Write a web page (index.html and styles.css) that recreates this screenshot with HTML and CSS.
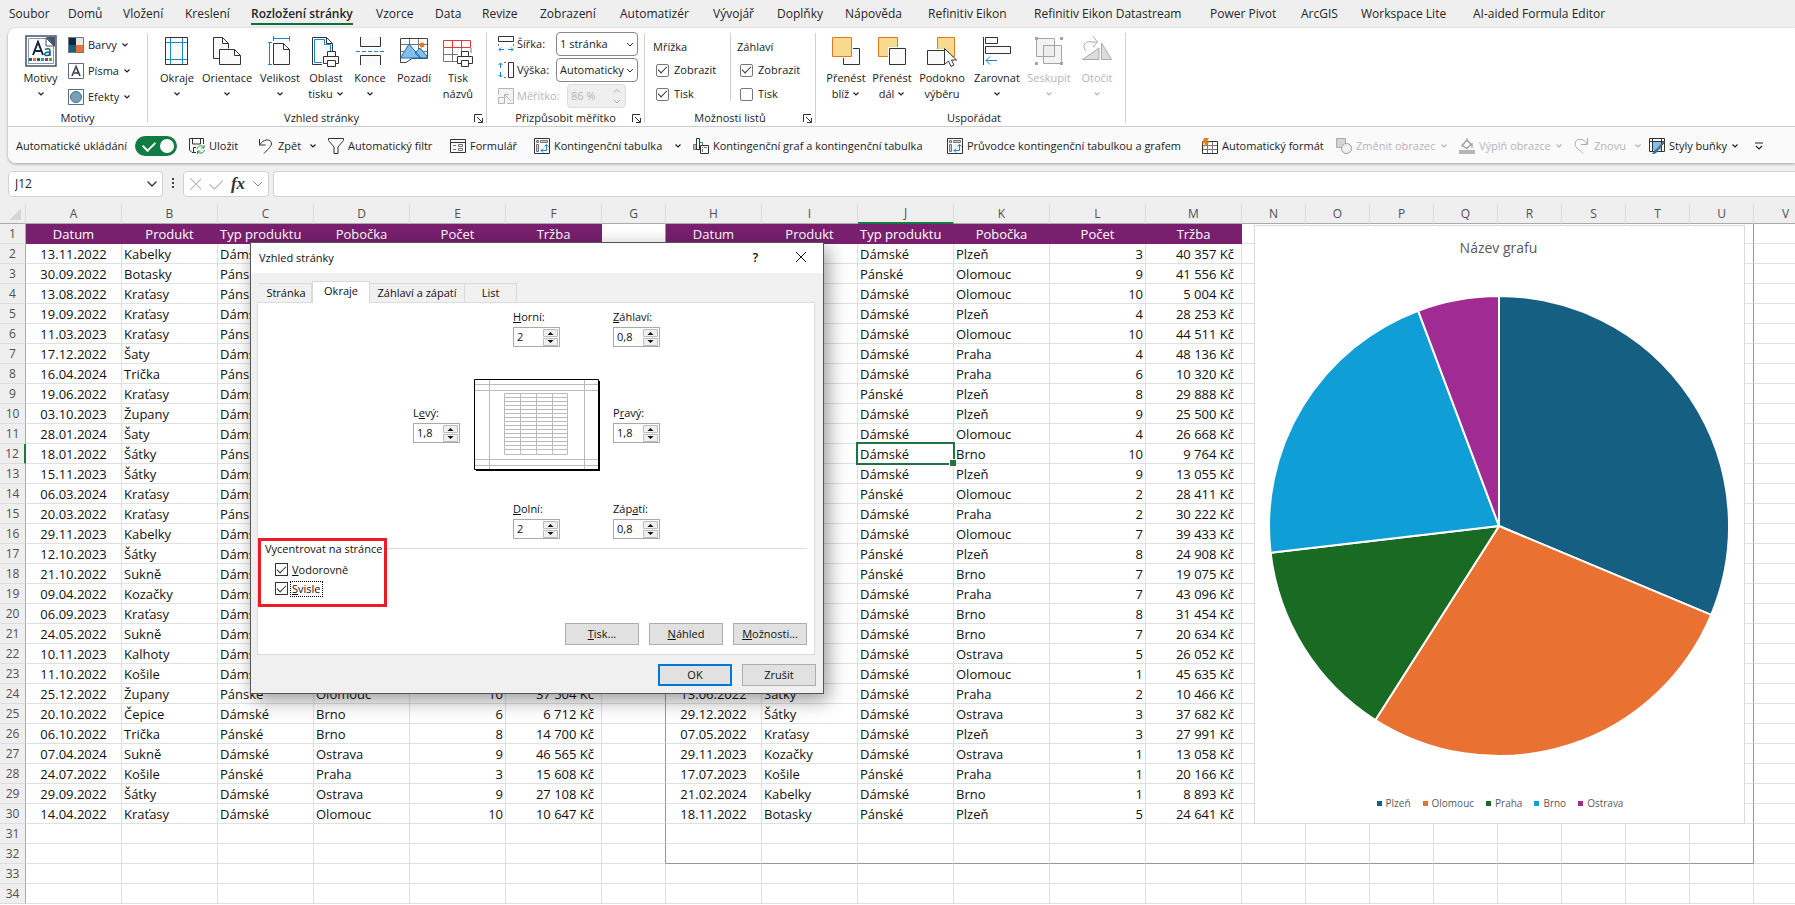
FILE: index.html
```html
<!DOCTYPE html>
<html lang="cs">
<head>
<meta charset="utf-8">
<title>Sešit – Vzhled stránky</title>
<link rel="stylesheet" href="styles.css">
</head>
<body>
<svg class="defs" aria-hidden="true">
  <symbol id="chev" viewBox="0 0 8 8"><path d="M1.500 2.500 4 5l2.500-2.500" fill="none" stroke="currentColor" stroke-width="1.200"/></symbol>
  <symbol id="launch" viewBox="0 0 9 9"><path d="M.5 8V.5H8M3 3l5 5M8.500 4v4.500H4" fill="none" stroke="#333"/></symbol>
  <symbol id="pivot" viewBox="0 0 16 16"><path d="M.5.5h15v15H.5z" fill="#fafafa" stroke="#333"/><path d="M2.500 2.500h2v2h-2zM6.500 2.500h7v2h-7zM2.500 6.500h2v7h-2z" fill="#ccc" stroke="#777"/><path d="M12.500 7v5.500H7M10.500 8.500l2-2 2 2M9 10.500l-2 2 2 2" fill="none" stroke="#1a86d0"/></symbol>
</svg>

<nav class="tabs">
  <a href="#">Soubor</a><a href="#">Domů</a><a href="#">Vložení</a><a href="#">Kreslení</a><a href="#" class="current"><span>Rozložení stránky</span></a><a href="#">Vzorce</a><a href="#">Data</a><a href="#">Revize</a><a href="#">Zobrazení</a><a href="#">Automatizér</a><a href="#">Vývojář</a><a href="#">Doplňky</a><a href="#">Nápověda</a><a href="#">Refinitiv Eikon</a><a href="#">Refinitiv Eikon Datastream</a><a href="#">Power Pivot</a><a href="#">ArcGIS</a><a href="#">Workspace Lite</a><a href="#">AI-aided Formula Editor</a>
</nav>

<header class="ribbon">
  <div class="groups">
    <section class="group g-themes">
      <div class="row">
        <button class="big w-64"><svg width="32" height="32" viewBox="0 0 32 32"><path d="M1 1h30v30H1z" fill="#fff" stroke="#44546a" stroke-width="1.500"/><path d="M3.500 3.500h25v25h-25z" fill="#fff" stroke="#8497b0"/><path d="M21 2h9v10z" fill="#44546a"/><path d="M21 3v8h8z" fill="#fff" stroke="#44546a"/><path d="M8 20 13 7l5 13M9.500 16h7" fill="none" stroke="#0e2841" stroke-width="2"/><path d="M20 14.500c4-2 5 0 5 1.500v5M25 17c-7 0-6 4-3 3.500 2 0 3-1.500 3-3" fill="none" stroke="#156082" stroke-width="1.500"/><path d="M4 23h3v3H4z" fill="#156082"/><path d="M8 23h3v3H8z" fill="#e97132"/><path d="M12 23h3v3h-3z" fill="#196b24"/><path d="M16 23h3v3h-3z" fill="#0f9ed5"/><path d="M20 23h3v3h-3z" fill="#a02b93"/><path d="M24 23h3v3h-3z" fill="#4ea72e"/></svg><span>Motivy</span><svg class="chev"><use href="#chev"/></svg></button>
        <div class="stack">
          <button class="small"><svg width="16" height="16"><path d="M0 0h8v8H0z" fill="#0e2841"/><path d="M8 0h8v8H8z" fill="#e8e8e8"/><path d="M0 8h8v8H0z" fill="#156082"/><path d="M8 8h8v8H8z" fill="#e97132"/><path d="M.5.5h15v15H.5z" fill="none" stroke="#777"/></svg><span>Barvy</span><svg class="chev"><use href="#chev"/></svg></button>
          <button class="small"><svg width="16" height="16"><path d="M.5.5h15v15H.5z" fill="#fff" stroke="#5b6b82"/><path d="M4 13 8 3.500 12 13M5.500 10h5" fill="none" stroke="#2b3a55" stroke-width="1.600"/><path d="M5 12l3-8" stroke="#e97132" stroke-width=".6"/></svg><span>Písma</span><svg class="chev"><use href="#chev"/></svg></button>
          <button class="small"><svg width="16" height="16"><path d="M.5.5h15v15H.5z" fill="#fff" stroke="#5b6b82"/><circle cx="8" cy="8" r="5.500" fill="#7ba0b8" stroke="#3b7590"/></svg><span>Efekty</span><svg class="chev"><use href="#chev"/></svg></button>
        </div>
      </div>
      <h2>Motivy</h2>
    </section>

    <section class="group g-page">
      <div class="row">
        <button class="big w-40"><svg width="24" height="32" viewBox="0 0 24 32"><path d="M.5 2.500h22v27H.5z" fill="#fafafa" stroke="#333"/><path d="M5.500 3v26M17.500 3v26M1 7.500h21M1 24.500h21" stroke="#1a86d0"/></svg><span>Okraje</span><svg class="chev"><use href="#chev"/></svg></button>
        <button class="big w-60"><svg width="28" height="32" viewBox="0 0 28 32"><g fill="#fafafa" stroke="#333"><path d="M6 23.500H.5v-21h9l6 6v5M9.500 2.500v6h6"/><path d="M6.500 14.500h15l6 6v9h-21zM21.500 14.500v6h6"/></g></svg><span>Orientace</span><svg class="chev"><use href="#chev"/></svg></button>
        <button class="big w-46"><svg width="24" height="32" viewBox="0 0 24 32"><path d="M5.500 8.500h10l6 6v15h-16zM15.500 8.500v6h6" fill="#fafafa" stroke="#333"/><path d="M5 3.500h16M5.500 1v5M21.500 1v5M1.500 8v22M0 7.500h4M0 29.500h4" stroke="#1a86d0"/></svg><span>Velikost</span><svg class="chev"><use href="#chev"/></svg></button>
        <button class="big w-46"><svg width="28" height="32" viewBox="0 0 28 32"><path d="M10 29.500H.5v-27h14l6 6V16" fill="#fafafa" stroke="#333"/><path d="M10 27.500H2.500v-23h10v5h6V16" fill="none" stroke="#1a86d0"/><path d="M14.500 2.500v6h6" fill="none" stroke="#333"/><g fill="#fff" stroke="#333"><path d="M15.500 22v-5.500h8V22"/><path d="M11.500 21.500h15v7h-15z"/><path d="M15.500 25.500h8v6h-8z"/></g></svg><span>Oblast<br>tisku <svg class="chev"><use href="#chev"/></svg></span></button>
        <button class="big w-42"><svg width="28" height="32" viewBox="0 0 28 32"><path d="M4.500 2v9.500h20V2M4.500 30v-9.500h20V30" fill="#fafafa" stroke="#333"/><path d="M0 16.500h30" stroke="#1a86d0" stroke-dasharray="4 2"/></svg><span>Konce</span><svg class="chev"><use href="#chev"/></svg></button>
        <button class="big w-46"><svg width="28" height="32" viewBox="0 0 28 32"><path d="M.5 3.500h27v20H12l-6 4H.5z" fill="#fff" stroke="#444"/><path d="M9.500 4v19M18.500 4v12M1 9.500h26M1 16.500h26" stroke="#777"/><path d="M1 22 9 9l12 14H1zM15 18l5-5 7 8v2H20z" fill="#83beec" stroke="#1a70b0"/><circle cx="22" cy="10" r="2.500" fill="#e07b1c"/></svg><span>Pozadí</span></button>
        <button class="big w-42"><svg width="30" height="32" viewBox="0 0 30 32"><path d="M15 26.500H.5v-14M28 13v5M.5 19.500H15M9.500 13v13M18.500 13v4" fill="none" stroke="#777"/><path d="M.5 5.500h27v7H.5zM9.500 5v8M18.500 5v8" fill="none" stroke="#e33" /><g fill="#fff" stroke="#333"><path d="M18.500 22v-5.500h7V22"/><path d="M14.500 21.500h15v7h-15z"/><path d="M18.500 25.500h7v6h-7z"/></g></svg><span>Tisk<br>názvů</span></button>
      </div>
      <h2>Vzhled stránky</h2><svg class="launch"><use href="#launch"/></svg>
    </section>

    <section class="group g-scale">
      <div class="fields">
        <svg width="16" height="16"><path d="M.5.5h15v5H.5z" fill="#fafafa" stroke="#333"/><path d="M.5 8v2M15.500 8v2" stroke="#777"/><path d="M1 13.500h5M10 13.500h5M3 11.500l-2 2 2 2M13 11.500l2 2-2 2" fill="none" stroke="#1a86d0"/></svg><label for="wid">Šířka:</label><select id="wid"><option>1 stránka</option></select>
        <svg width="16" height="16"><path d="M10.500.5h5v15h-5z" fill="#fafafa" stroke="#333"/><path d="M6 .5h2M6 15.500h2" stroke="#777"/><path d="M2.500 1v5M2.500 10v5M.5 3l2-2 2 2M.5 13l2 2 2-2" fill="none" stroke="#1a86d0"/></svg><label for="hei">Výška:</label><select id="hei"><option>Automaticky</option></select>
        <svg width="16" height="16"><path d="M.5 7V.5h15v15H9M.5 9.500h6v6h-6z" fill="#f3f3f3" stroke="#b5b5b5"/><path d="m13 13-6-6M6.500 11V6.500H11" fill="none" stroke="#b5b5b5"/></svg><label for="sca" class="off">Měřítko:</label><span class="pct"><input id="sca" value="86 %" disabled><svg width="8" height="18"><path d="M1 5.500 4 2.500 7 5.500M1 13l3 3 3-3" fill="none" stroke="#aaa"/></svg></span>
      </div>
      <h2>Přizpůsobit měřítko</h2><svg class="launch"><use href="#launch"/></svg>
    </section>

    <section class="group g-sheet">
      <div class="row">
        <div class="checks"><h3>Mřížka</h3><label><input type="checkbox" checked>Zobrazit</label><label><input type="checkbox" checked>Tisk</label></div>
        <div class="checks"><h3>Záhlaví</h3><label><input type="checkbox" checked>Zobrazit</label><label><input type="checkbox">Tisk</label></div>
      </div>
      <h2>Možnosti listů</h2><svg class="launch"><use href="#launch"/></svg>
    </section>

    <section class="group g-arrange">
      <div class="row">
        <button class="big w-46"><svg width="28" height="32" viewBox="0 0 28 32"><path d="M11.500 13.500h16v16h-16z" fill="#fafafa" stroke="#333"/><path d="M0 2h21v21H0z" fill="#fff"/><path d="M.5 2.500h19v19H.5z" fill="#f8da8e" stroke="#e07b1c"/></svg><span>Přenést<br>blíž <svg class="chev"><use href="#chev"/></svg></span></button>
        <button class="big w-46"><svg width="28" height="32" viewBox="0 0 28 32"><path d="M.5 2.500h19v19H.5z" fill="#f8da8e" stroke="#e07b1c"/><path d="M10 12h18v19H10z" fill="#fff"/><path d="M11.500 13.500h16v16h-16z" fill="#fafafa" stroke="#333"/></svg><span>Přenést<br>dál <svg class="chev"><use href="#chev"/></svg></span></button>
        <button class="big w-54"><svg width="30" height="32" viewBox="0 0 30 32"><path d="M10.500 2.500h17v19h-17z" fill="#f8da8e" stroke="#e07b1c"/><path d="M0 14h18v2H0z" fill="#fff"/><path d="M.5 15.500h17v14H.5z" fill="#fafafa" stroke="#333"/><path d="M17.500 13.500v16l4-3.500 2.500 5.500 3-1.500-2.500-5h5z" fill="#fff" stroke="#333"/></svg><span>Podokno<br>výběru</span></button>
        <button class="big w-56"><svg width="28" height="32" viewBox="0 0 28 32"><path d="M.5 2v28M2.500 2.500h12v6h-12zM2.500 11.500h25v7h-25z" fill="#fafafa" stroke="#333"/><path d="M14 25.500H3M7 21.500l-4 4 4 4" fill="none" stroke="#1a86d0"/></svg><span>Zarovnat</span><svg class="chev"><use href="#chev"/></svg></button>
        <button class="big w-48 off" disabled><svg width="28" height="32" viewBox="0 0 28 32"><path d="M1.500 3.500h18v18h-18zM8.500 10.500h18v18h-18z" fill="#f3f3f3" stroke="#a5a5a5"/><path d="M8.500 10.500h11v11h-11z" fill="#eee" stroke="#a5a5a5"/><path d="M0 2h3v3H0zM25 2h3v3h-3zM0 27h3v3H0zM25 27h3v3h-3z" fill="#a5a5a5"/></svg><span>Seskupit</span><svg class="chev"><use href="#chev"/></svg></button>
        <button class="big w-48 off" disabled><svg width="30" height="32" viewBox="0 0 30 32"><path d="M17 13v11.500H.5zM19.500 8v16.500h10z" fill="#ddd" stroke="#aaa"/><path d="M4 16c-5-5 0-11 5-9h6M11 1.500 15.500 7 11 12" fill="none" stroke="#aaa"/></svg><span>Otočit</span><svg class="chev"><use href="#chev"/></svg></button>
      </div>
      <h2>Uspořádat</h2>
    </section>
  </div>

  <div class="qat">
    <label for="auto">Automatické ukládání</label>
    <input id="auto" class="toggle" type="checkbox" checked>
    <button><svg width="16" height="16"><path d="M7 14.500H3L.5 12V.5h14V6M3.500 1v5h8V1M4.500 14V9.500H7" fill="none" stroke="#333"/><path d="M8 11c1-4 6-4 7-1M15 7v3h-3M15.500 12c-1 4-6 4-7 1M8.500 16v-3h3" fill="none" stroke="#2b9348"/></svg>Uložit</button>
    <button><svg width="16" height="16"><path d="M1.500 1v6h6M2 6.500C6 0 14 1 13.500 6 13 9 9 12 6 15.500" fill="none" stroke="#333"/></svg>Zpět</button>
    <svg class="chev"><use href="#chev"/></svg>
    <button><svg width="16" height="16"><path d="M.5.5h15v2L10 9v6.500H6V9L.5 2.500z" fill="#fafafa" stroke="#333"/></svg>Automatický filtr</button>
    <button><svg width="16" height="16"><path d="M.5 1.500h15v13H.5zM.5 4.500h15" fill="#fafafa" stroke="#333"/><path d="M3 7.500h3M3 11.500h3M8.500 6.500h4v2h-4zM8.500 10.500h4v2h-4z" fill="none" stroke="#777"/></svg>Formulář</button>
    <button><svg width="16" height="16"><use href="#pivot"/></svg>Kontingenční tabulka</button>
    <svg class="chev"><use href="#chev"/></svg>
    <button><svg width="16" height="16"><path d="M.5 6.500h3v5h-3z" fill="#bbb" stroke="#777"/><path d="M3.500.5h3v11h-3z" fill="#fff" stroke="#333"/><path d="M6.500 4.500h3v3" fill="none" stroke="#1a86d0"/><path d="M7.500 7.500h8v8h-8z" fill="#fff" stroke="#333"/><path d="M9 9.500h1M11 9.500h3M9.500 11v3" stroke="#777"/></svg>Kontingenční graf a kontingenční tabulka</button>
    <button><svg width="16" height="16"><use href="#pivot"/></svg>Průvodce kontingenční tabulkou a grafem</button>
    <button><svg width="16" height="16"><path d="M.5 3.500h15v12H.5z" fill="#fff" stroke="#333"/><path d="M1 7.500h14M1 11.500h14M5.500 4v11M10.500 4v11" stroke="#777"/><path d="M2 0h5L5 3.500h3L1 10l2-4.500H0z" fill="#e8801c"/></svg>Automatický formát</button>
    <button class="off" disabled><svg width="16" height="16"><path d="M.5.5h9v9h-9z" fill="#d5d5d5" stroke="#aaa"/><circle cx="10.500" cy="10.500" r="5" fill="#f0f0f0" stroke="#999"/></svg>Změnit obrazec <svg class="chev"><use href="#chev"/></svg></button>
    <button class="off" disabled><svg width="16" height="16"><path d="M0 12h16v4H0z" fill="#b5b5b5"/><path d="M3 7.500 8 2l4 4.500-4 4zM8 2V0M13 5v5" fill="none" stroke="#999" stroke-width="1.200"/></svg>Výplň obrazce <svg class="chev"><use href="#chev"/></svg></button>
    <button class="off" disabled><svg width="16" height="16"><path d="M13.500 0v6.500H7M13 6C10-.500 1 0 1 6c0 4 5 6 8 9.500" fill="none" stroke="#aaa"/></svg>Znovu</button>
    <svg class="chev off"><use href="#chev"/></svg>
    <button><svg width="16" height="16"><path d="M.5.5h15v13H.5z" fill="#fff" stroke="#333"/><path d="M3 3h10v9H3z" fill="#83beec"/><path d="M0 3.500h15M3.500 1v12M12.500 1v12" stroke="#333"/><path d="M15 4 8 12" stroke="#666" stroke-width="2"/><path d="M9 11c0 4-3 5-6 5 2-2 2-5 6-5" fill="#1a70b0"/></svg>Styly buňky <svg class="chev"><use href="#chev"/></svg></button>
    <svg width="8" height="8"><path d="M0 1h8M1 4l3 3 3-3" fill="none" stroke="#222" stroke-width="1.200"/></svg>
  </div>
</header>

<div class="formula">
  <div class="namebox"><input aria-label="Pole názvů" value="J12"><svg width="10" height="8"><path d="M.5 1.500 5 6l4.500-4.500" fill="none" stroke="#333" stroke-width="1.300"/></svg></div>
  <svg class="dots" width="3" height="12"><path d="M0 0h2v2H0zM0 4h2v2H0zM0 8h2v2H0z" fill="#444"/></svg>
  <div class="fx"><svg width="12" height="12"><path d="m0 0 12 12M12 0 0 12" stroke="#b5b5b5" stroke-width="1.200"/></svg><svg width="16" height="12"><path d="m.5 6.500 5 4.500 10-10" fill="none" stroke="#b5b5b5" stroke-width="1.200"/></svg><i>fx</i><svg width="10" height="8"><path d="M.5 1.500 5 6l4.500-4.500" fill="none" stroke="#888"/></svg></div>
  <input class="bar" aria-label="Řádek vzorců">
</div>

<main class="sheet">
  <table class="grid">
    <colgroup><col class="c-num"><col class="c-wide" span="6"><col class="c-std"><col class="c-wide" span="6"><col class="c-std" span="8"><col></colgroup>
    <thead><tr id="heads"></tr></thead>
    <tbody id="rows"></tbody>
  </table>

  <figure class="chart">
    <figcaption>Název grafu</figcaption>
    <svg viewBox="-232 -232 464 464" role="img" aria-label="Výsečový graf">
      <g stroke="#fff" stroke-width="2" stroke-linejoin="round">
        <path d="M0 0V-230A230 230 0 0 1 212.200 88.800z" fill="#156082"/>
        <path d="M0 0 212.200 88.800A230 230 0 0 1-123.600 194z" fill="#e97132"/>
        <path d="M0 0-123.600 194A230 230 0 0 1-228.400 26.800z" fill="#196b24"/>
        <path d="M0 0-228.400 26.800A230 230 0 0 1-80.900-215.300z" fill="#0f9ed5"/>
        <path d="M0 0-80.900-215.300A230 230 0 0 1 0-230z" fill="#a02b93"/>
      </g>
    </svg>
    <ul><li class="k1">Plzeň</li><li class="k2">Olomouc</li><li class="k3">Praha</li><li class="k4">Brno</li><li class="k5">Ostrava</li></ul>
  </figure>

  <section class="dialog" role="dialog" aria-labelledby="dt">
    <div class="title"><h1 id="dt">Vzhled stránky</h1><button aria-label="Nápověda">?</button><button aria-label="Zavřít"><svg width="10" height="10"><path d="m0 0 10 10M10 0 0 10" stroke="#111"/></svg></button></div>
    <div class="body">
      <div class="dtabs" role="tablist"><button role="tab">Stránka</button><button role="tab" class="on" aria-selected="true">Okraje</button><button role="tab">Záhlaví a zápatí</button><button role="tab">List</button></div>
      <div class="panel" role="tabpanel">
        <div class="margins">
          <div class="f top"><label for="m1"><u>H</u>orní:</label><span class="spin"><input id="m1" value="2"><svg width="15" height="17"><use href="#ud"/></svg></span></div>
          <div class="f head"><label for="m2"><u>Z</u>áhlaví:</label><span class="spin"><input id="m2" value="0,8"><svg width="15" height="17"><use href="#ud"/></svg></span></div>
          <div class="f left"><label for="m3">L<u>e</u>vý:</label><span class="spin"><input id="m3" value="1,8"><svg width="15" height="17"><use href="#ud"/></svg></span></div>
          <svg class="preview" width="126" height="92"><path d="M2 2h124v90H2z"/><path d="M.5.5h124v90H.5z" fill="#fff" stroke="#000"/><path d="M1 5.500h123M1 11.500h123M1 80.500h123M1 86.500h123M15.500 1v89M110.500 1v89" stroke="#bbb"/><path d="M30.500 14.500h63v61h-63zM46.500 14v62M62.500 14v62M78.500 14v62M30 18.500h64M30 22.500h64M30 26.500h64M30 30.500h64M30 34.500h64M30 38.500h64M30 42.500h64M30 46.500h64M30 50.500h64M30 54.500h64M30 58.500h64M30 62.500h64M30 66.500h64M30 70.500h64" fill="none" stroke="#bbb"/></svg>
          <div class="f right"><label for="m4">P<u>r</u>avý:</label><span class="spin"><input id="m4" value="1,8"><svg width="15" height="17"><use href="#ud"/></svg></span></div>
          <div class="f bottom"><label for="m5"><u>D</u>olní:</label><span class="spin"><input id="m5" value="2"><svg width="15" height="17"><use href="#ud"/></svg></span></div>
          <div class="f foot"><label for="m6">Záp<u>a</u>tí:</label><span class="spin"><input id="m6" value="0,8"><svg width="15" height="17"><use href="#ud"/></svg></span></div>
        </div>
        <div class="center">
          <fieldset class="marked"><legend>Vycentrovat na stránce</legend>
            <label><input type="checkbox" checked><span><u>V</u>odorovně</span></label>
            <label><input type="checkbox" checked><span class="focus"><u>S</u>visle</span></label>
          </fieldset>
          <hr>
        </div>
        <div class="btns"><button><u>T</u>isk...</button><button><u>N</u>áhled</button><button><u>M</u>ožnosti...</button></div>
      </div>
      <div class="btns end"><button class="ok">OK</button><button>Zrušit</button></div>
    </div>
  </section>
</main>
<svg class="defs" aria-hidden="true"><symbol id="ud" viewBox="0 0 15 17"><path d="M.5.5h14v7H.5zM.5 9.500h14v7H.5z" fill="#f0f0f0" stroke="#bbb"/><path d="M4.500 6h6L7.500 3zM4.500 11h6l-3 3z" fill="#111"/></symbol></svg>
<script src="grid.js"></script>
</body>
</html>
```
FILE: styles.css
```css
* { box-sizing: border-box; }
body {
  margin: 0; height: 100vh; overflow: hidden; display: flex; flex-direction: column;
  background: #efefef; color: #222; font: 11px/16px "Open Sans", "Noto Sans", sans-serif;
}
button, input, select { font: inherit; color: inherit; }
button { border: 0; background: none; padding: 0; white-space: nowrap; }
h1, h2, h3 { margin: 0; font: inherit; }
.defs { position: absolute; width: 0; height: 0; }
.off { color: #b5b5b5; }
.chev { width: 8px; height: 8px; flex: none; }

.tabs {
  flex: none; height: 28px; padding: 1px 0 0 9px; font-size: 12px; line-height: 26px;
  display: grid; white-space: nowrap;
  grid-template-columns: 59px 55px 62px 66px 125px 59px 47px 58px 80px 93px 64px 68px 83px 106px 176px 91px 60px 112px 1fr;
}
.tabs a { color: #262626; text-decoration: none; }
.tabs .current span { display: inline-block; height: 24px; font-weight: 600; border-bottom: 2px solid #0e703c; }

.ribbon {
  flex: none; margin-left: 8px; background: #fff; border-radius: 8px 0 0 8px; overflow: hidden;
  box-shadow: 0 1px 3px #0005;
}
.groups { display: flex; height: 99px; padding: 5px 0 3px; border-bottom: 1px solid #ccc; }
.group { position: relative; flex: none; border-right: 1px solid #d0d0d0; display: flex; flex-direction: column; }
.group h2 { margin-top: auto; text-align: center; line-height: 11px; }
.launch { position: absolute; right: 3px; bottom: 0; width: 9px; height: 9px; }
.g-themes { width: 140px; }
.g-page { width: 339px; padding-left: 9px; }
.g-scale { width: 158px; }
.g-sheet { width: 171px; }
.g-arrange { width: 310px; padding-left: 7px; }
.row { display: flex; }
.big { display: flex; flex-direction: column; align-items: center; padding-top: 2px; flex: none; }
.big > svg:first-child { margin-bottom: 3px; }
.big > .chev { margin-top: 4px; }
.w-40 { width: 40px; } .w-42 { width: 42px; } .w-46 { width: 46px; } .w-48 { width: 48px; }
.w-54 { width: 54px; } .w-56 { width: 56px; } .w-60 { width: 60px; } .w-64 { width: 60px; padding-left: 5px; }
.stack { margin-top: -1px; }
.small { display: flex; align-items: center; gap: 4px; height: 26px; }
.fields { display: grid; grid-template-columns: 16px 42px 82px; grid-auto-rows: 26px; align-items: center; padding-left: 11px; margin-top: -2px; }
.fields label { padding-left: 3px; white-space: nowrap; }
.fields select { width: 82px; height: 24px; border: 1px solid #888; border-radius: 4px; padding: 0 13px 0 3px; appearance: none;
  overflow: hidden; text-overflow: clip; background-color: #fff;
  background-image: linear-gradient(45deg, #0000 42%, #333 42% 62%, #0000 62%), linear-gradient(-45deg, #0000 42%, #333 42% 62%, #0000 62%);
  background-size: 3px 3px; background-repeat: no-repeat; background-position: right 7px center, right 4px center; }
.pct { display: flex; align-items: center; margin-left: 11px; width: 59px; height: 24px; border: 1px solid #ddd; border-radius: 4px; background: #efefef; }
.pct input { width: 45px; border: 0; background: none; padding: 0 3px; color: #b5b5b5; }
.checks { width: 86px; padding: 5px 0 0 8px; height: 68px; }
.checks + .checks { border-left: 1px solid #ccc; padding-left: 6px; }
.checks h3 { margin-bottom: 2px; line-height: 18px; }
.checks label { display: flex; align-items: center; gap: 5px; padding-left: 3px; height: 24px; }
input[type=checkbox] { flex: none; appearance: none; margin: 0; width: 13px; height: 13px; border: 1px solid #777; border-radius: 2px; background: #fff; display: grid; place-items: center; }
input[type=checkbox]:checked::before { content: ""; width: 8px; height: 4px; margin-bottom: 3px; border: solid #333; border-width: 0 0 1px 1px; transform: rotate(-45deg); }

.qat {
  display: grid; height: 36px; padding: 2px 0 0 8px; align-items: center; background: #fafafa; white-space: nowrap;
  grid-template-columns: 119px 54px 69px 51px 19px 122px 84px 140px 19px 254px 255px 134px 123px 115px 60px 15px 106px 8px;
}
.qat button { display: flex; align-items: center; gap: 4px; }
.qat .toggle { width: 42px; height: 20px; border-radius: 10px; border: 0; background: #107c41; position: relative; }
.qat .toggle::after { content: ""; position: absolute; right: 3px; top: 3px; width: 14px; height: 14px; border-radius: 50%; background: #fff; }
.qat .toggle:checked::before { position: absolute; left: 8px; top: 5px; width: 10px; height: 6px; border-color: #fff; border-width: 0 0 2px 2px; }

.formula { flex: none; display: flex; align-items: center; height: 26px; margin: 8px 0 7px 8px; }
.namebox, .fx, .bar { height: 26px; border: 1px solid #d2d2d2; border-radius: 4px; background: #fff; display: flex; align-items: center; }
.namebox { width: 155px; padding: 0 5px 0 6px; }
.namebox input { flex: 1; min-width: 0; border: 0; padding: 0; font-size: 12px; }
.dots { margin: 0 8px 0 9px; }
.fx { width: 86px; gap: 8px; padding: 0 6px; color: #333; }
.fx i { font: italic bold 17px "Liberation Serif", serif; }
.bar { flex: 1; margin-left: 4px; border-right: 0; border-radius: 4px 0 0 4px; }

.sheet { flex: 1; min-height: 0; position: relative; overflow: hidden; background: #fff; }
.grid { table-layout: fixed; width: max(100%, 1818px); border-collapse: separate; border-spacing: 0; background: #fff; color: #111; font-size: 13px; line-height: 18px; }
.c-num { width: 26px; } .c-wide { width: 96px; } .c-std { width: 64px; }
.grid th, .grid td { height: 20px; padding: 0 2px; border: solid #e0e0e0; border-width: 0 1px 1px 0; white-space: nowrap; overflow: hidden; text-align: left; }
.grid th { background: #efefef; color: #505050; font-weight: 400; text-align: center; padding: 0; font-size: 12px; }
.grid thead th { border-bottom-color: #aaa; border-right-color: #ddd; }
.grid tbody th { border-right-color: #aaa; border-bottom-color: #ddd; }
.grid .corner { background: linear-gradient(135deg, #0000 50%, #d5d5d5 50%) 9px 4px / 12px 12px no-repeat #efefef; }
.grid .sel-col { border-bottom: 2px solid #107c41; }
.grid .sel-row { border-right: 2px solid #107c41; }
.grid td.date, .grid td.hd { text-align: center; }
.grid td.num { text-align: right; }
.grid td.cur { text-align: right; padding-right: 7px; }
.grid td.hd { background: #78206e; border-color: #78206e; color: #fff; }
.grid td.hd.type { text-align: left; }
.grid td.pr { border-right-color: #999; }
.grid td.pb { border-bottom-color: #999; }
.grid td.active { position: relative; overflow: visible; }
.active::before { content: ""; position: absolute; inset: -2px; border: 2px solid #217346; }
.active::after { content: ""; position: absolute; right: -3px; bottom: -3px; width: 6px; height: 6px; background: #217346; border: solid #fff; border-width: 1px 0 0 1px; }

.chart { position: absolute; left: 1254px; top: 21px; width: 491px; height: 599px; margin: 0; padding: 12px 2px 0 0; background: #fff; border: 1px solid #d9d9d9; display: flex; flex-direction: column; align-items: center; color: #595959; }
.chart figcaption { font-size: 14px; line-height: 20px; }
.chart svg { width: 464px; height: 464px; margin-top: 36px; }
.chart ul { display: flex; gap: 12px; margin: 37px 0 0; padding: 0 0 0 3px; list-style: none; font-size: 10px; }
.chart li { display: flex; align-items: center; gap: 4px; }
.chart li::before { content: ""; width: 5px; height: 5px; }
.chart .k1::before { background: #156082; } .chart .k2::before { background: #e97132; } .chart .k3::before { background: #196b24; }
.chart .k4::before { background: #0f9ed5; } .chart .k5::before { background: #a02b93; }

.dialog { position: absolute; left: 250px; top: 38px; width: 574px; border: 1px solid #555; background: #f0f0f0; box-shadow: 4px 6px 18px #0006; color: #111; }
.title { display: flex; align-items: center; height: 30px; background: #fff; padding-left: 8px; }
.title h1 { flex: 1; }
.title button { width: 45px; height: 30px; font-size: 12px; font-weight: 600; }
.body { padding: 9px 6px 7px; }
.dtabs { display: flex; align-items: flex-end; height: 20px; padding-left: 2px; }
.dtabs button { height: 19px; border: solid #d9d9d9; border-width: 1px 1px 0 0; }
.dtabs button:nth-child(1) { width: 53px; padding-left: 2px; } .dtabs button:nth-child(3) { width: 95px; } .dtabs button:nth-child(4) { width: 52px; }
.dtabs .on { position: relative; width: 58px; height: 22px; margin-bottom: -1px; background: #fff; border-left-width: 1px; padding-bottom: 3px; }
.panel { width: 558px; height: 353px; background: #fff; border: 1px solid #dcdcdc; padding: 6px 7px 9px; display: flex; flex-direction: column; }
.margins { display: grid; grid-template-columns: 61px 39px 100px 47px; grid-template-rows: 96px 96px 37px; padding-left: 148px; }
.f label { display: block; line-height: 16px; margin-bottom: 2px; }
.f { width: 47px; }
.top { grid-area: 1 / 3; } .head { grid-area: 1 / 4; } .left { grid-area: 2 / 1; } .right { grid-area: 2 / 4; } .bottom { grid-area: 3 / 3; } .foot { grid-area: 3 / 4; }
.preview { grid-area: 2 / 2; margin-top: -26px; }
.spin { display: flex; width: 47px; height: 20px; border: 1px solid #aaa; padding: 0 1px; align-items: center; background: #fff; }
.spin input { width: 28px; border: 0; padding: 0 2px; }
.center { display: flex; align-items: flex-start; }
.center hr { flex: 1; border: 0; border-top: 1px solid #dcdcdc; margin: 10px 0 0; }
.marked { margin: 0 0 0 -7px; width: 129px; height: 69px; padding: 0; border: 3px solid #ed1c24; }
.marked legend { float: left; width: 100%; padding: 0 0 0 4px; margin: 0 0 3px; white-space: nowrap; }
.marked label { clear: both; display: flex; align-items: center; gap: 2px; height: 19px; padding-left: 14px; }
.marked input[type=checkbox] { border-color: #333; border-radius: 0; }
.marked label span { line-height: 14px; border: 1px dotted transparent; padding: 0 1px; }
.marked label .focus { border-color: #000; }
.btns { display: flex; justify-content: flex-end; gap: 10px; margin-top: auto; }
.btns button { width: 74px; height: 22px; border: 1px solid #adadad; background: #e1e1e1; }
.btns.end { margin-top: 9px; padding-right: 1px; }
.btns .ok { border: 2px solid #0078d7; }
```
FILE: grid.js
```js
const columns = 'ABCDEFGHIJKLMNOPQRSTUV'.split('');
const titles = ['Datum', 'Produkt', 'Typ produktu', 'Pobočka', 'Počet', 'Tržba'];
const left = `13.11.2022|Kabelky|Dámské
30.09.2022|Botasky|Pánské
13.08.2022|Kraťasy|Pánské
19.09.2022|Kraťasy|Dámské
11.03.2023|Kraťasy|Pánské
17.12.2022|Šaty|Dámské
16.04.2024|Trička|Pánské
19.06.2022|Kraťasy|Dámské
03.10.2023|Župany|Dámské
28.01.2024|Šaty|Dámské
18.01.2022|Šátky|Pánské
15.11.2023|Šátky|Dámské
06.03.2024|Kraťasy|Dámské
20.03.2022|Kraťasy|Pánské
29.11.2023|Kabelky|Dámské
12.10.2023|Šátky|Dámské
21.10.2022|Sukně|Dámské
09.04.2022|Kozačky|Dámské
06.09.2023|Kraťasy|Dámské
24.05.2022|Sukně|Dámské
10.11.2023|Kalhoty|Dámské
11.10.2022|Košile|Dámské
25.12.2022|Župany|Pánské|Olomouc|10|37 504 Kč
20.10.2022|Čepice|Dámské|Brno|6|6 712 Kč
06.10.2022|Trička|Pánské|Brno|8|14 700 Kč
07.04.2024|Sukně|Dámské|Ostrava|9|46 565 Kč
24.07.2022|Košile|Pánské|Praha|3|15 608 Kč
29.09.2022|Šátky|Dámské|Ostrava|9|27 108 Kč
14.04.2022|Kraťasy|Dámské|Olomouc|10|10 647 Kč`.split('\n').map(r => r.split('|'));
const right = `||Dámské|Plzeň|3|40 357 Kč
||Pánské|Olomouc|9|41 556 Kč
||Dámské|Olomouc|10|5 004 Kč
||Dámské|Plzeň|4|28 253 Kč
||Dámské|Olomouc|10|44 511 Kč
||Dámské|Praha|4|48 136 Kč
||Dámské|Praha|6|10 320 Kč
||Pánské|Plzeň|8|29 888 Kč
||Dámské|Plzeň|9|25 500 Kč
||Dámské|Olomouc|4|26 668 Kč
||Dámské|Brno|10|9 764 Kč
||Dámské|Plzeň|9|13 055 Kč
||Pánské|Olomouc|2|28 411 Kč
||Dámské|Praha|2|30 222 Kč
||Dámské|Olomouc|7|39 433 Kč
||Pánské|Plzeň|8|24 908 Kč
||Pánské|Brno|7|19 075 Kč
||Dámské|Praha|7|43 096 Kč
||Dámské|Brno|8|31 454 Kč
||Dámské|Brno|7|20 634 Kč
||Dámské|Ostrava|5|26 052 Kč
||Dámské|Olomouc|1|45 635 Kč
13.06.2022|Šátky|Dámské|Praha|2|10 466 Kč
29.12.2022|Šátky|Dámské|Ostrava|3|37 682 Kč
07.05.2022|Kraťasy|Dámské|Plzeň|3|27 991 Kč
29.11.2023|Kozačky|Dámské|Ostrava|1|13 058 Kč
17.07.2023|Košile|Pánské|Praha|1|20 166 Kč
21.02.2024|Kabelky|Dámské|Brno|1|8 893 Kč
18.11.2022|Botasky|Pánské|Plzeň|5|24 641 Kč`.split('\n').map(r => r.split('|'));
const kinds = ['date', '', '', '', 'num', 'cur'];

const heads = document.getElementById('heads');
heads.innerHTML = '<th class="corner"></th>' +
  columns.map(c => `<th scope="col"${c === 'J' ? ' class="sel-col"' : ''}>${c}</th>`).join('');

let html = '';
for (let r = 1; r <= 34; r++) {
  html += `<tr><th scope="row"${r === 12 ? ' class="sel-row"' : ''}>${r}</th>`;
  columns.forEach((c, i) => {
    const block = i < 6 ? left : i > 6 && i < 13 ? right : null;
    const k = i < 6 ? i : i - 7;
    const cls = [];
    let text = '';
    if (block && r === 1) { text = titles[k]; cls.push('hd'); if (k === 2) cls.push('type'); }
    else if (block && block[r - 2]) { text = block[r - 2][k] || ''; if (kinds[k]) cls.push(kinds[k]); }
    if (r <= 32 && (c === 'G' || c === 'U')) cls.push('pr');
    if (r === 32 && i > 6 && i < 21) cls.push('pb');
    if (r === 12 && c === 'J') cls.push('active');
    html += `<td class="${cls.join(' ')}">${text}</td>`;
  });
  html += '</tr>';
}
document.getElementById('rows').innerHTML = html;
```
